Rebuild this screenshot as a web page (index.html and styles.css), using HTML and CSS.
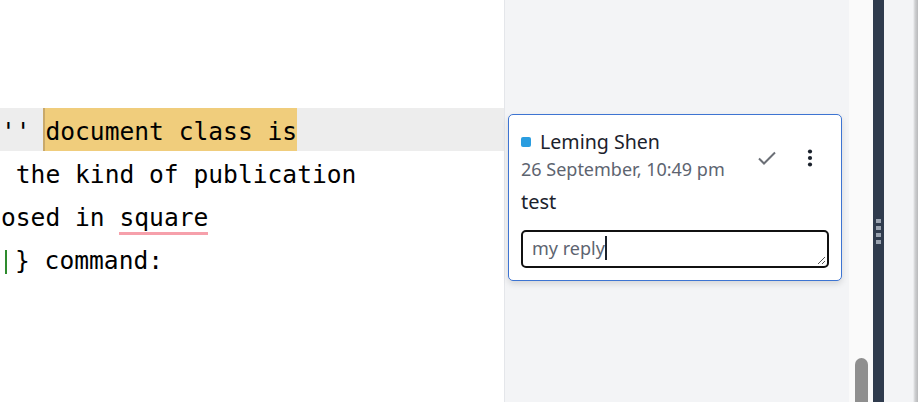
FILE: index.html
```html
<!DOCTYPE html>
<html>
<head>
<meta charset="utf-8">
<link rel="stylesheet" href="styles.css">
</head>
<body>
<div class="app">
  <div class="editor">
    <div class="line active"><span class="txt">'' <span class="hl">document class is</span></span></div>
    <div class="line"><span class="txt"> the kind of publication</span></div>
    <div class="line"><span class="txt">osed in <span class="squig">square</span></span></div>
    <div class="line"><span class="txt"><span class="cur"></span>} command:</span></div>
  </div>
  <div class="review">
    <div class="card">
      <div class="head">
        <div class="who">
          <div class="name"><span class="dot"></span>Leming Shen</div>
          <div class="date">26 September, 10:49 pm</div>
        </div>
        <div class="actions">
          <svg class="check" width="20" height="16" viewBox="0 0 20 16"><path d="M2 8.5 L7 13.5 L18 2.5" fill="none" stroke="#6b6f76" stroke-width="2"/></svg>
          <svg class="kebab" width="6" height="18" viewBox="0 0 6 18"><circle cx="3" cy="2.5" r="2.1" fill="#1b222c"/><circle cx="3" cy="9" r="2.1" fill="#1b222c"/><circle cx="3" cy="15.5" r="2.1" fill="#1b222c"/></svg>
        </div>
      </div>
      <div class="body">test</div>
      <div class="reply"><span class="rtext">my reply</span><span class="caret"></span>
        <svg class="grip" width="10" height="10" viewBox="0 0 10 10"><path d="M9 2 L2 9 M9 6 L6 9" stroke="#555" stroke-width="1"/></svg>
      </div>
    </div>
  </div>
  <div class="track"><div class="thumb"></div></div>
  <div class="divider">
    <div class="grips"><span></span><span></span><span></span><span></span></div>
  </div>
  <div class="rest"></div>
</div>
</body>
</html>
```
FILE: styles.css
```css
html, body { margin: 0; padding: 0; }
body { width: 918px; height: 402px; overflow: hidden; background: #fff; }
.app { display: flex; height: 402px; }
.editor {
  width: 504px; flex: none; border-right: 1px solid #e4e6ea;
  padding-top: 108px; box-sizing: content-box; overflow: hidden;
  font-family: "DejaVu Sans Mono", monospace; font-size: 24.6px; color: #000;
}
.line { height: 43px; line-height: 47px; white-space: pre; padding-left: 1px; }
.line.active { background: #ededed; }
.hl { background: #f0cd7c; display: inline-block; height: 43px; line-height: 47px; vertical-align: top; border-left: 2px solid #c9a96a; margin-left: -2px; }
.squig { display: inline-block; position: relative; }
.squig::after { content: ""; position: absolute; left: 0; right: 0; top: 38px; height: 3px; background: #f6a0ab; }
.cur { display: inline-block; width: 2px; height: 24px; background: #2e8b2e; vertical-align: -5px; margin-left: 4px; margin-right: 8px; }
.review { width: 344px; flex: none; background: #f3f4f6; padding: 114px 0 0 3px; box-sizing: border-box; }
.card {
  width: 334px; box-sizing: border-box; background: #fff;
  border: 1px solid #3d74d2; border-radius: 5px;
  box-shadow: 0 3px 6px rgba(0,0,0,0.12);
  padding: 13px 12px 12px 12px;
  font-family: "Noto Sans", sans-serif; color: #1b222c;
}
.head { display: flex; justify-content: space-between; }
.name { font-size: 19.6px; line-height: 28px; display: flex; align-items: center; }
.dot { width: 10px; height: 10px; background: #2a9de0; border-radius: 2px; margin-right: 9px; }
.date { font-size: 18px; line-height: 26px; color: #5d6470; }
.actions { display: flex; align-items: center; gap: 30px; padding-right: 16px; padding-top: 6px; }
.body { font-size: 20px; line-height: 28px; margin-top: 6px; }
.reply {
  margin-top: 14px; height: 38px; box-sizing: border-box; border: 2px solid #111; border-radius: 5px;
  padding: 0 9px 2px; font-size: 18px; color: #5d6470; display: flex; align-items: center; position: relative;
}
.rtext { line-height: 24px; }
.caret { width: 2px; height: 24px; background: #1b222c; margin-left: 0; }
.grip { position: absolute; right: 1px; bottom: 1px; }
.track { width: 24px; flex: none; background: #fafafa; position: relative; }
.thumb { position: absolute; left: 6px; top: 358px; width: 13px; height: 60px; background: #8f8f8f; border-radius: 7px; }
.divider { width: 11px; flex: none; background: #2f3b4d; display: flex; align-items: center; justify-content: center; }
.grips { display: flex; flex-direction: column; gap: 3px; margin-top: 60px; }
.grips span { width: 5px; height: 4px; background: #9aa3b0; }
.rest { flex: 1; background: linear-gradient(to right, #f3f4f6 0, #f3f4f6 29px, #cfd0d2 31px, #b8b9bb 34px); }
```
